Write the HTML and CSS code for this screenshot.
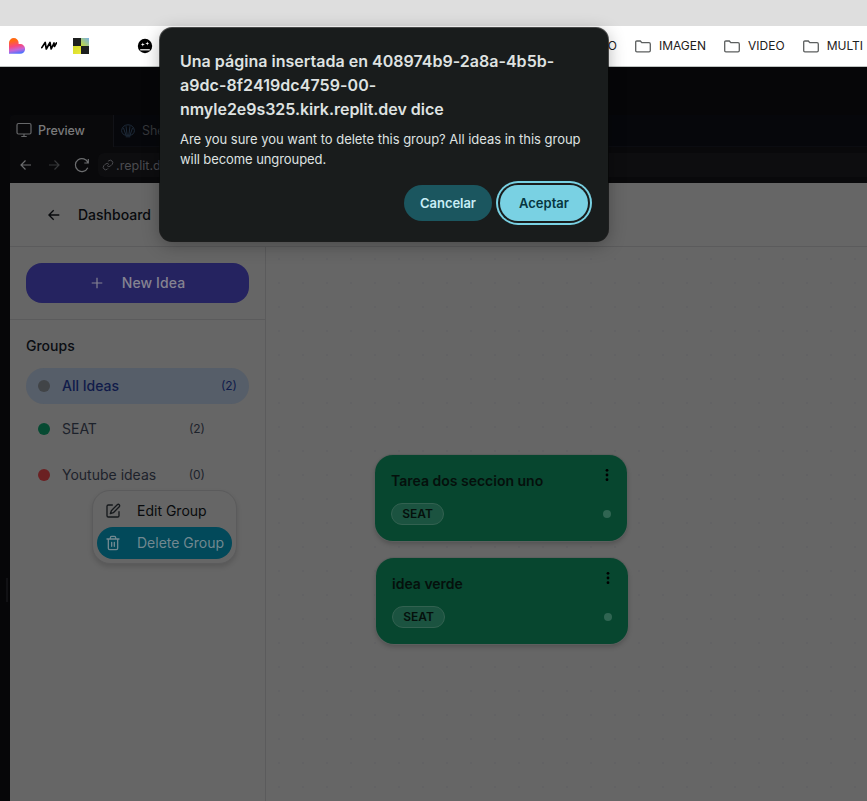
FILE: index.html
```html
<!DOCTYPE html>
<html lang="es">
<head>
<meta charset="utf-8">
<title>Dashboard</title>
<link rel="stylesheet" href="styles.css">
</head>
<body>
<div class="window">
  <div class="toolbar"></div>
  <nav class="bookmarks">
    <div class="favicons">
      <svg width="16" height="16" viewBox="0 0 16 16"><defs><linearGradient id="heart" x1=".3" y1="0" x2=".5" y2="1"><stop offset=".15" stop-color="#ff6a13"/><stop offset=".5" stop-color="#f8477c"/><stop offset=".75" stop-color="#c565d8"/><stop offset="1" stop-color="#4b73ff"/></linearGradient></defs><path d="M0 4.8a4.8 4.8 0 0 1 9.600 0v1.300h1.600a4.800 4.800 0 0 1 0 9.700H0z" fill="url(#heart)"/></svg>
      <svg width="16" height="16" viewBox="0 0 16 16"><path d="M.8 9.600 4.200 4.500 5.300 11 9 4.500 10.200 11 13 5M13 5l.4 3.500L15.500 5" fill="none" stroke="#000" stroke-width="1.700" stroke-linejoin="round" stroke-linecap="round"/></svg>
      <svg width="16" height="16" viewBox="0 0 16 16"><defs><linearGradient id="a" x1="0" y1="1" x2="1" y2="0"><stop offset="0" stop-color="#c5dc35"/><stop offset="1" stop-color="#78b0e8"/></linearGradient><linearGradient id="b" x1="0" y1="0" x2="1" y2="1"><stop offset="0" stop-color="#d0da28"/><stop offset="1" stop-color="#eee93a"/></linearGradient></defs><path d="M0 0h8v8H0zM8 8h8v8H8z" fill="#1d1f1e"/><path d="M8 0h8v8H8z" fill="url(#a)"/><path d="M0 8h8v8H0z" fill="url(#b)"/></svg>
      <svg class="robot" width="16" height="16" viewBox="0 0 16 16"><circle cx="8" cy="8" r="7.200"/><path d="M5.800 4.400 6.300 6 7.900 6.500 6.300 7 5.800 8.600 5.300 7 3.700 6.500 5.300 6zM10.300 3.400l.5 1.500 1.500.5-1.500.5-.5 1.500-.5-1.500-1.500-.5 1.500-.5z" fill="#fff"/><path d="M3.200 11h9.600v1.500H3.200z" fill="#ccc"/></svg>
    </div>
    <div class="folders">
      <span class="folder cut">AUDIO</span>
      <span class="folder"><svg width="16" height="13" viewBox="0 0 16 13"><path d="M.7 2.200q0-1.200 1.200-1.200h3.400l1.500 1.700h7.200q1.300 0 1.300 1.200v6.700q0 1.200-1.300 1.200H1.900Q.7 11.800.7 10.600z"/></svg>IMAGEN</span>
      <span class="folder"><svg width="16" height="13" viewBox="0 0 16 13"><path d="M.7 2.200q0-1.200 1.200-1.200h3.400l1.500 1.700h7.200q1.300 0 1.300 1.200v6.700q0 1.200-1.300 1.200H1.900Q.7 11.800.7 10.600z"/></svg>VIDEO</span>
      <span class="folder"><svg width="16" height="13" viewBox="0 0 16 13"><path d="M.7 2.200q0-1.200 1.200-1.200h3.400l1.500 1.700h7.200q1.300 0 1.300 1.200v6.700q0 1.200-1.300 1.200H1.900Q.7 11.800.7 10.600z"/></svg>MULTI</span>
    </div>
  </nav>
  <div class="workspace">
    <div class="handle"></div>
    <div class="tabs">
      <div class="tab active"><svg width="16" height="16" viewBox="0 0 16 16"><rect x="1" y="1.500" width="14" height="10.500" rx="1.500"/><path d="M8 12v2.500M5.300 14.500h5.400"/></svg>Preview</div>
      <div class="tab shell"><svg width="14" height="14" viewBox="0 0 14 14"><path d="M4.700 12.800h4.600M5 11.300C2.400 11 .6 9 .6 6.500 1 3 3.600.8 7 .8s6 2.200 6.400 5.700C13.400 9 11.600 11 9 11.300zM5 11.300 2.500 4M9 11.300 11.500 4M6.200 11.300 5 2.200M7.800 11.300 9 2.200"/></svg>Shell</div>
    </div>
    <div class="address">
      <svg class="nav" width="14" height="14" viewBox="0 0 14 14"><path d="M12 7H2M6.500 2.500 2 7l4.500 4.500"/></svg>
      <svg class="nav dim" width="14" height="14" viewBox="0 0 14 14"><path d="M2 7h10M7.500 2.500 12 7l-4.500 4.500"/></svg>
      <svg class="nav reload" width="16" height="16" viewBox="0 0 16 16"><path d="M14 5.800A6.500 6.500 0 1 0 13.800 10.800M14.300 2v4h-4"/></svg>
      <div class="url"><svg width="12" height="12" viewBox="0 0 24 24"><path d="M10 13a5 5 0 0 0 7.500.5l3-3a5 5 0 0 0-7-7L11.700 5.200M14 11a5 5 0 0 0-7.500-.5l-3 3a5 5 0 0 0 7 7l1.700-1.700"/></svg><span>.replit.dev</span></div>
    </div>
    <main class="app">
      <header class="app-header">
        <svg width="12" height="12" viewBox="0 0 12 12"><path d="M11.300 6H1M5.700 1.200.9 6l4.800 4.800"/></svg>
        <span>Dashboard</span>
      </header>
      <div class="app-body">
        <aside class="sidebar">
          <div class="new-wrap"><button class="new"><svg width="12" height="12" viewBox="0 0 12 12"><path d="M6 .7v10.600M.7 6h10.600"/></svg>New Idea</button></div>
          <h2>Groups</h2>
          <ul class="groups">
            <li class="selected"><i class="dot gray"></i><span class="name">All Ideas</span><span class="count">(2)</span></li>
            <li><i class="dot green"></i><span class="name">SEAT</span><span class="count">(2)</span></li>
            <li><i class="dot red"></i><span class="name">Youtube ideas</span><span class="count">(0)</span></li>
          </ul>
          <div class="menu">
            <div class="item"><svg width="16" height="16" viewBox="0 0 24 24"><path d="M11 3H5a2 2 0 0 0-2 2v14a2 2 0 0 0 2 2h14a2 2 0 0 0 2-2v-6"/><path d="M18.400 2.600a2.100 2.100 0 0 1 3 3L12.500 14.500 8 16l1.500-4.500z"/></svg>Edit Group</div>
            <div class="item danger"><svg width="16" height="16" viewBox="0 0 24 24"><path d="M3 6h18M19 6v14a2 2 0 0 1-2 2H7a2 2 0 0 1-2-2V6M8 6V4a2 2 0 0 1 2-2h4a2 2 0 0 1 2 2v2M10 11v6M14 11v6"/></svg>Delete Group</div>
          </div>
        </aside>
        <section class="canvas">
          <article class="card first"><h3>Tarea dos seccion uno</h3><svg class="more" width="4" height="14" viewBox="0 0 4 14"><circle cx="2" cy="2.300" r="1.400"/><circle cx="2" cy="7" r="1.400"/><circle cx="2" cy="11.700" r="1.400"/></svg><div class="foot"><span class="tag">SEAT</span><i></i></div></article>
          <article class="card second"><h3>idea verde</h3><svg class="more" width="4" height="14" viewBox="0 0 4 14"><circle cx="2" cy="2.300" r="1.400"/><circle cx="2" cy="7" r="1.400"/><circle cx="2" cy="11.700" r="1.400"/></svg><div class="foot"><span class="tag">SEAT</span><i></i></div></article>
        </section>
      </div>
    </main>
  </div>
  <div class="dialog" role="alertdialog">
    <h1><span class="l1">Una página insertada en 408974b9-2a8a-4b5b-</span><br><span class="l2">a9dc-8f2419dc4759-00-</span><br><span class="l3">nmyle2e9s325.kirk.replit.dev dice</span></h1>
    <p><span class="p1">Are you sure you want to delete this group? All ideas in this group</span><br><span class="p2">will become ungrouped.</span></p>
    <div class="actions"><button class="cancel">Cancelar</button><button class="accept">Aceptar</button></div>
  </div>
</div>
</body>
</html>
```
FILE: styles.css
```css
* { box-sizing: border-box; }
body { margin: 0; font-family: Inter, "Liberation Sans", sans-serif; }
button { font-family: inherit; border: 0; padding: 0; }
svg { flex: none; display: block; }
h1, h2, h3, p, ul { margin: 0; padding: 0; }
.window { position: relative; width: 867px; height: 801px; overflow: hidden; display: flex; flex-direction: column; background: #060608; }
.toolbar { height: 26px; background: #dedede; flex: none; }
.bookmarks { height: 41px; flex: none; background: #fff; border-bottom: 1px solid #bfc4c2; display: flex; justify-content: space-between; align-items: center; padding-left: 9px; }
.favicons { display: flex; gap: 16px; }
.robot { margin-left: 32px; }
.folders { display: flex; gap: 18px; padding-right: 4px; }
.folder { display: flex; align-items: center; gap: 8px; font-size: 12px; line-height: 16px; color: #1d2020; white-space: nowrap; }
.folder svg { fill: none; stroke: #5c5f5f; stroke-width: 1.3; }
.workspace { position: relative; flex: 1; display: flex; flex-direction: column; padding: 48px 0 0 10px; background: #060608; min-height: 0; }
.handle { position: absolute; left: 6px; top: 511px; width: 2px; height: 24px; background: #111114; }
.tabs { height: 32px; flex: none; display: flex; background: #06070b; border-bottom: 1px solid #0b0c11; font-size: 12.5px; font-weight: 500; }
.tab { display: flex; align-items: center; gap: 6px; height: 31px; padding-left: 6px; color: #7a7a7b; letter-spacing: -.1px; }
.tab svg { fill: none; stroke: #67686a; stroke-width: 1.2; }
.tab.active { width: 104px; height: 32px; padding-bottom: 2px; background: #09090b; border-right: 1px solid #111217; border-radius: 4px 0 0; }
.shell { color: #35363a; gap: 7px; padding-left: 7px; font-weight: 400; }
.shell svg { stroke: #1e2b3a; stroke-width: 1; }
.address { height: 36px; flex: none; display: flex; align-items: center; gap: 14px; padding-left: 9px; background: #09090b; }
.nav { fill: none; stroke: #6c6d6f; stroke-width: 1.2; }
.dim { stroke: #37383a; }
.reload { margin-left: -1px; }
.url { flex: 1; height: 24px; margin-left: -6px; padding-left: 4px; border-radius: 6px 0 0 6px; background: #0d0d0f; color: #4b4b4f; display: flex; align-items: center; gap: 2px; font-size: 12.6px; }
.url svg { fill: none; stroke: #4b4b4f; stroke-width: 2; }
.app { flex: 1; display: flex; flex-direction: column; min-height: 0; background: #666; }
.app-header { height: 64px; flex: none; border-bottom: 1px solid #5b5b5c; display: flex; align-items: center; gap: 18px; padding-left: 38px; font-size: 14px; font-weight: 500; color: #080a0d; }
.app-header svg { fill: none; stroke: #080a0d; stroke-width: 1.3; }
.app-body { flex: 1; display: flex; min-height: 0; }
.sidebar { position: relative; width: 256px; flex: none; border-right: 1px solid #5b5b5c; }
.new-wrap { padding: 16px; border-bottom: 1px solid #5b5b5c; height: 73px; }
.new { width: 100%; height: 40px; padding: 0 0 1px 1px; border-radius: 16px; background: #252360; color: #858391; display: flex; align-items: center; justify-content: center; gap: 19px; font-size: 14px; font-weight: 500; letter-spacing: .1px; }
.new svg { fill: none; stroke: #858391; stroke-width: 1.2; }
h2 { margin: 16px 16px 13px; font-size: 14px; line-height: 19px; font-weight: 500; color: #0a0d12; }
.groups { list-style: none; margin: 0 16px; font-size: 14px; color: #1d222b; }
.groups li { height: 46px; display: flex; align-items: center; padding: 0 44px 1px 12px; }
.groups .selected { height: 36px; padding-right: 12px; margin-bottom: 2px; border-radius: 18px; background: #565e69; color: #101b4a; font-weight: 500; }
.dot { width: 12px; height: 12px; border-radius: 50%; margin-right: 12px; position: relative; top: .5px; }
.gray { background: #414447; }
.green { background: #064a32; }
.red { background: #6b2022; }
.name { flex: 1; }
.count { font-size: 12px; font-weight: 400; padding-bottom: 1px; }
.menu { position: absolute; left: 82px; top: 243px; width: 145px; height: 74px; padding: 4px; border: 1px solid #5b5b5c; border-radius: 18px; background: #666; box-shadow: 0 3px 5px rgba(0,0,0,.14); }
.item { height: 32px; display: flex; align-items: center; gap: 16px; padding: 0 0 1px 8px; border-radius: 16px; font-size: 14px; color: #090b0d; white-space: nowrap; }
.item svg { fill: none; stroke: #15181b; stroke-width: 2; stroke-linecap: round; stroke-linejoin: round; }
.danger { background: #02495a; color: #718890; }
.danger svg { stroke: #718890; }
.canvas { position: relative; flex: 1; background-image: radial-gradient(circle at center, #626264 0 .8px, transparent 1px); background-size: 24px 24px; background-position: 1px 0; }
.card { position: absolute; width: 252px; height: 86px; padding: 16px; border-radius: 18px; background: #07462f; color: #05100c; box-shadow: 0 0 0 1px #5c5f5e, 0 3px 5px rgba(0,0,0,.2); }
.first { left: 109px; top: 208px; }
.second { left: 110px; top: 311px; }
.card h3 { font-size: 14px; line-height: 20px; font-weight: 600; white-space: nowrap; }
.more { position: absolute; right: 18px; top: 13px; }
.foot { display: flex; align-items: center; justify-content: space-between; margin-top: 12px; }
.tag { width: 53px; height: 22px; border: 1px solid #326150; border-radius: 11px; background: #1b5340; font-size: 12px; line-height: 20px; font-weight: 600; text-align: center; }
.foot i { width: 8px; height: 8px; border-radius: 50%; background: #306552; }
.dialog { position: absolute; left: 160px; top: 28px; width: 448px; height: 213px; padding: 21px 20px; border-radius: 12px; background: #191c1c; box-shadow: 0 0 0 1px rgba(5,7,7,.7), 0 4px 18px rgba(0,0,0,.3); color: #dfe2e1; white-space: nowrap; }
h1 { font-size: 16px; line-height: 24px; font-weight: 600; }
.l1 { letter-spacing: .02px; }
.l2 { letter-spacing: .07px; }
.l3 { letter-spacing: -.03px; }
p { margin-top: 8px; font-size: 13px; line-height: 20px; letter-spacing: -.025px; }
.p2 { letter-spacing: -.08px; }
.actions { display: flex; justify-content: flex-end; gap: 8px; margin: 16px 0 0; }
.actions button { height: 36px; border-radius: 18px; font-size: 13px; font-weight: 600; }
.actions .cancel { width: 88px; background: #1b565f; color: #c9edf5; letter-spacing: -.05px; }
.actions .accept { width: 88px; background: #79d1e3; color: #07363f; box-shadow: 0 0 0 2px #191c1c, 0 0 0 4px #79d1e3; }
```
